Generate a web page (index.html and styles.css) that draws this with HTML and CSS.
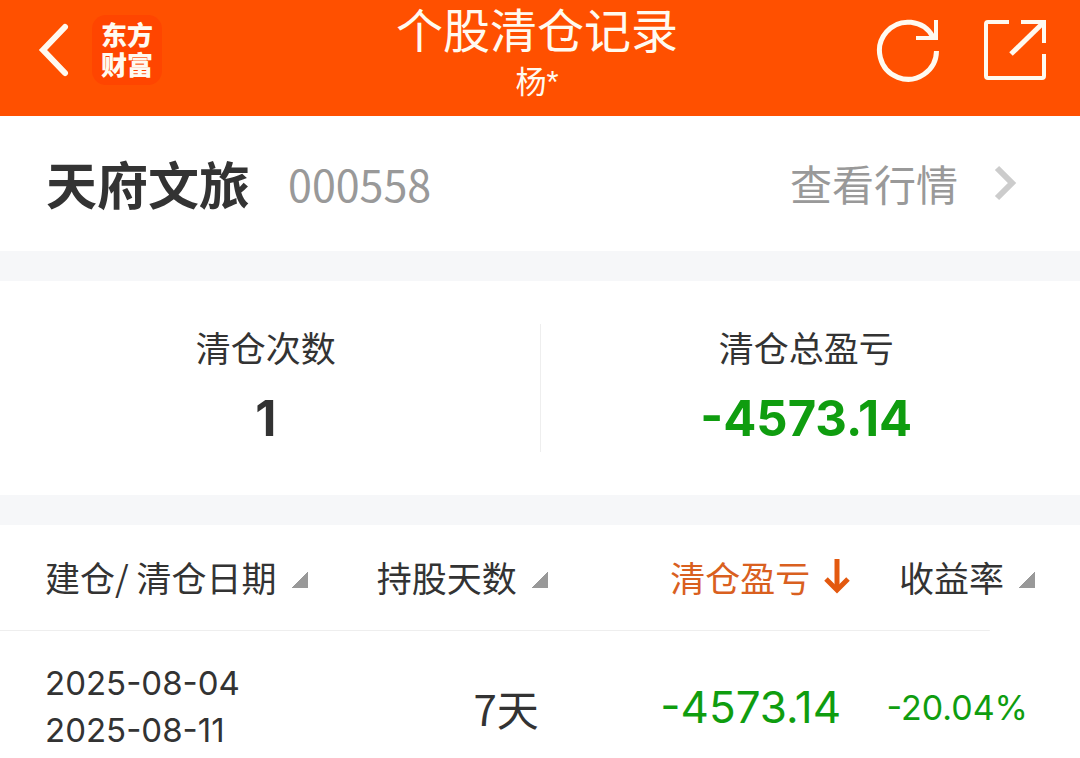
FILE: index.html
```
<!DOCTYPE html>
<html lang="zh-CN">
<head>
  <meta charset="UTF-8" />
  <meta name="viewport" content="width=device-width, initial-scale=1">
  <title>个股清仓记录</title>
  <link rel="stylesheet" href="styles.css">
</head>
<body>
  <header class="topbar">
    <div class="topbar-left">
      <button type="button" class="icon-btn back" aria-label="返回">
        <svg width="32" height="56" viewBox="0 0 32 56" fill="none" stroke="#fffaf0" stroke-width="6" stroke-linecap="round" stroke-linejoin="miter">
          <path d="M27 5 L5 28 L27 51" />
        </svg>
      </button>
      <div class="logo"><span>东方</span><span>财富</span></div>
    </div>
    <div class="topbar-title">
      <h1>个股清仓记录</h1>
      <p>杨*</p>
    </div>
    <div class="topbar-right">
      <button type="button" class="icon-btn" aria-label="刷新">
        <svg width="64" height="64" viewBox="0 0 64 64" fill="none" stroke="#fffaf0" stroke-width="5">
          <path d="M60.500 33 A28.500 28.500 0 1 1 57 19" />
          <path d="M60 2 V20 H40" stroke-width="4" />
        </svg>
      </button>
      <button type="button" class="icon-btn" aria-label="分享">
        <svg width="64" height="64" viewBox="0 0 64 64" fill="none" stroke="#fffaf0" stroke-width="4">
          <path d="M27 4 H6 Q4 4 4 6 V58 Q4 60 6 60 H60 Q62 60 62 58 V36" />
          <path d="M39 4 H62 V25" />
          <path d="M61 5 L29 36" stroke-width="5" />
        </svg>
      </button>
    </div>
  </header>

  <section class="stock">
    <h2>天府文旅</h2>
    <span class="stock-code">000558</span>
    <a href="#" class="stock-link">查看行情
      <svg width="24" height="36" viewBox="0 0 24 36" fill="none" stroke="#ccc" stroke-width="6">
        <path d="M3 3 L18 18 L3 33" />
      </svg>
    </a>
  </section>

  <section class="summary">
    <div class="summary-item">
      <span class="summary-label">清仓次数</span>
      <strong>1</strong>
    </div>
    <div class="summary-item">
      <span class="summary-label">清仓总盈亏</span>
      <strong class="down">-4573.14</strong>
    </div>
  </section>

  <table class="records">
    <colgroup>
      <col class="col-date">
      <col class="col-days">
      <col class="col-profit">
      <col class="col-rate">
    </colgroup>
    <thead>
      <tr>
        <th><button type="button" class="sort">建仓/ 清仓日期<i class="corner"></i></button></th>
        <th><button type="button" class="sort">持股天数<i class="corner"></i></button></th>
        <th>
          <button type="button" class="sort active">清仓盈亏
            <svg width="26" height="36" viewBox="0 0 26 36" fill="none" stroke="#e3590f" stroke-width="5">
              <path d="M13 1 V31" />
              <path d="M2 21 L13 32 L24 21" />
            </svg>
          </button>
        </th>
        <th><button type="button" class="sort">收益率<i class="corner"></i></button></th>
      </tr>
    </thead>
    <tbody>
      <tr>
        <td class="dates">2025-08-04<br>2025-08-11</td>
        <td class="days">7天</td>
        <td class="profit down">-4573.14</td>
        <td class="rate down">-20.04%</td>
      </tr>
    </tbody>
  </table>
</body>
</html>
```

FILE: styles.css
```
* {
  box-sizing: border-box;
}
body {
  margin: 0;
  background: #fff;
  color: #333;
  font-family: "Noto Sans CJK SC", sans-serif;
}
h1, h2, p {
  margin: 0;
  font-weight: normal;
}
button {
  padding: 0;
  border: none;
  background: none;
  color: inherit;
  font: inherit;
  cursor: pointer;
}
svg {
  display: block;
}

/* top bar */
.topbar {
  display: grid;
  grid-template-columns: 1fr auto 1fr;
  height: 116px;
  padding: 0 34px 0 28px;
  background: #ff5000;
  color: #fffaf0;
  font-family: "Liberation Sans", "Noto Sans CJK SC", sans-serif;
}
.topbar-left, .topbar-right {
  display: flex;
  align-items: center;
  height: 100px;
}
.topbar-left {
  gap: 22px;
}
.topbar-right {
  justify-content: flex-end;
  gap: 42px;
}
.back {
  padding-left: 10px;
}
.logo {
  display: flex;
  flex-direction: column;
  align-items: center;
  justify-content: center;
  width: 70px;
  height: 70px;
  padding-top: 2px;
  border-radius: 14px;
  background: #ff4500;
  font-size: 26px;
  font-weight: 900;
  line-height: 30px;
}
.topbar-title {
  padding-top: 2px;
  text-align: center;
}
.topbar-title h1 {
  font-size: 47px;
  line-height: 60px;
}
.topbar-title p {
  font-size: 31px;
  line-height: 42px;
}

/* stock */
.stock {
  display: flex;
  align-items: center;
  height: 135px;
  padding: 0 62px 2px 46px;
}
.stock h2 {
  font-size: 51px;
  font-weight: bold;
}
.stock-code {
  margin-left: 38px;
  color: #999;
  font-size: 43px;
}
.stock-link {
  display: flex;
  align-items: center;
  gap: 36px;
  margin-left: auto;
  color: #999;
  font-size: 42px;
  text-decoration: none;
}

/* summary */
.summary {
  display: flex;
  padding: 43px 0;
  border-top: 30px solid #f6f7f9;
  border-bottom: 30px solid #f6f7f9;
}
.summary-item {
  display: flex;
  flex: 1 1 0;
  flex-direction: column;
  align-items: center;
  height: 128px;
  padding-right: 8px;
}
.summary-item + .summary-item {
  border-left: 1px solid #eee;
}
.summary-label {
  font-size: 35px;
  line-height: 46px;
}
.summary strong {
  font-family: Inter, sans-serif;
  font-size: 49px;
  line-height: 98px;
}
.down {
  color: #0f9d0f;
}

/* records */
.records {
  width: 100%;
  border-collapse: collapse;
  table-layout: fixed;
}
.col-date {
  width: 31%;
}
.col-days {
  width: 20%;
}
.col-profit {
  width: 28%;
}
.records thead {
  background: linear-gradient(#eee, #eee) left bottom / calc(100% - 90px) 1px no-repeat;
}
.records th {
  height: 106px;
  padding: 0 3px 4px 0;
  font-weight: normal;
  text-align: right;
}
.records th:first-child, .records td:first-child {
  padding-left: 45px;
  text-align: left;
}
.records th:last-child {
  padding-right: 45px;
}
.sort {
  display: inline-flex;
  align-items: center;
  font-size: 35px;
  white-space: nowrap;
}
.sort svg {
  margin-left: 14px;
}
.active {
  color: #d9601f;
}
.corner {
  width: 16px;
  height: 16px;
  margin: 8px 0 0 15px;
  background: linear-gradient(135deg, transparent 50%, #999 50%);
}
.records td {
  padding: 29px 12px 4px 0;
  font-size: 42px;
  text-align: right;
}
.records .dates {
  font-family: Inter, sans-serif;
  font-size: 33px;
  line-height: 47px;
}
.records .profit {
  font-family: Inter, sans-serif;
  font-size: 44px;
}
.records .rate {
  padding-right: 52px;
  font-family: Inter, sans-serif;
  font-size: 34px;
}
```
